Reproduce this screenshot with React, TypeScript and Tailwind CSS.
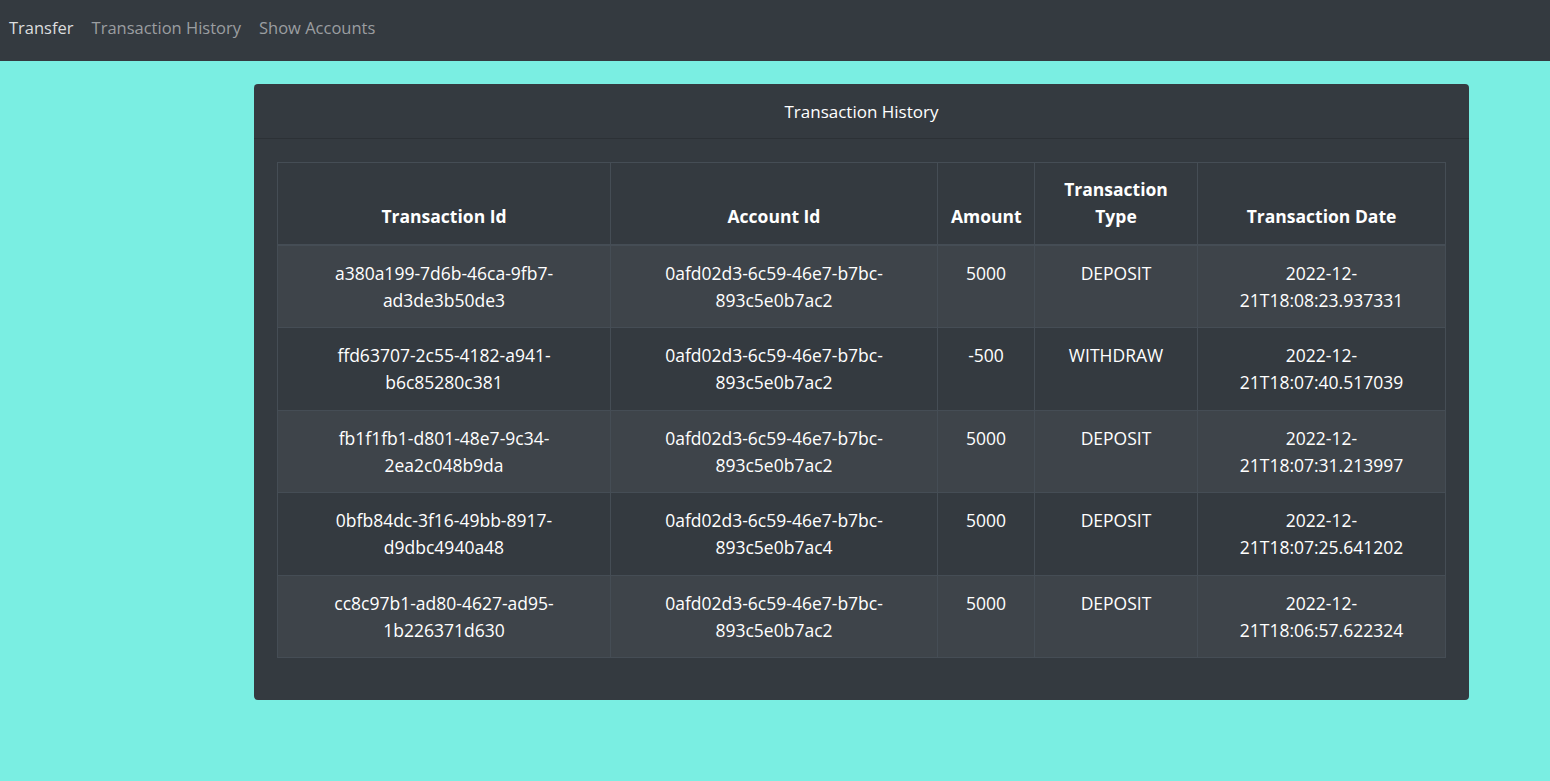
type Txn = {
  id: string;
  accountId: string;
  amount: number;
  type: string;
  date: string;
};

const transactions: Txn[] = [
  { id: "a380a199-7d6b-46ca-9fb7-ad3de3b50de3", accountId: "0afd02d3-6c59-46e7-b7bc-893c5e0b7ac2", amount: 5000, type: "DEPOSIT", date: "2022-12-21T18:08:23.937331" },
  { id: "ffd63707-2c55-4182-a941-b6c85280c381", accountId: "0afd02d3-6c59-46e7-b7bc-893c5e0b7ac2", amount: -500, type: "WITHDRAW", date: "2022-12-21T18:07:40.517039" },
  { id: "fb1f1fb1-d801-48e7-9c34-2ea2c048b9da", accountId: "0afd02d3-6c59-46e7-b7bc-893c5e0b7ac2", amount: 5000, type: "DEPOSIT", date: "2022-12-21T18:07:31.213997" },
  { id: "0bfb84dc-3f16-49bb-8917-d9dbc4940a48", accountId: "0afd02d3-6c59-46e7-b7bc-893c5e0b7ac4", amount: 5000, type: "DEPOSIT", date: "2022-12-21T18:07:25.641202" },
  { id: "cc8c97b1-ad80-4627-ad95-1b226371d630", accountId: "0afd02d3-6c59-46e7-b7bc-893c5e0b7ac2", amount: 5000, type: "DEPOSIT", date: "2022-12-21T18:06:57.622324" },
];

const th = "border border-[#454d55] border-b-2 px-[13px] pt-[13px] pb-[14px] align-bottom font-bold text-center";
const td = "border border-[#454d55] px-[13px] pt-[14px] pb-[13.4px] align-top text-center";

function NavBar() {
  return (
    <nav className="h-[61px] bg-[#343a40] flex items-center pb-[4px] text-[16.5px]">
      <a className="px-[9px] text-[#dcdedf]">Transfer</a>
      <a className="px-[9px] text-[#9b9ea1]">Transaction History</a>
      <a className="px-[9px] text-[#9b9ea1]">Show Accounts</a>
    </nav>
  );
}

export default function App() {
  return (
    <div className="min-h-[781px] bg-[#7aeee2] text-white" style={{ fontFamily: '"Open Sans", "Noto Sans", sans-serif' }}>
      <NavBar />
      <div className="pl-[254px] pr-[81px] pt-[23px]">
        <div className="bg-[#343a40] rounded-[4px] text-[17.5px] leading-[27px]">
          <div className="h-[55px] flex items-center justify-center border-b border-[#2c3136] text-[17px]">
            Transaction History
          </div>
          <div className="px-[23px] pt-[23px] pb-[42px]">
            <table className="w-full table-fixed border-collapse">
              <colgroup>
                <col className="w-[333px]" />
                <col className="w-[327px]" />
                <col className="w-[97px]" />
                <col className="w-[163px]" />
                <col />
              </colgroup>
              <thead>
                <tr>
                  <th className={th}>Transaction Id</th>
                  <th className={th}>Account Id</th>
                  <th className={th}>Amount</th>
                  <th className={th}>Transaction Type</th>
                  <th className={th}>Transaction Date</th>
                </tr>
              </thead>
              <tbody>
                {transactions.map((t, i) => (
                  <tr key={t.id} className={i % 2 === 0 ? "bg-[#3e444a]" : ""}>
                    <td className={td}>{t.id}</td>
                    <td className={td}>{t.accountId}</td>
                    <td className={td}>{t.amount}</td>
                    <td className={td}>{t.type}</td>
                    <td className={td}>{t.date}</td>
                  </tr>
                ))}
              </tbody>
            </table>
          </div>
        </div>
      </div>
    </div>
  );
}
